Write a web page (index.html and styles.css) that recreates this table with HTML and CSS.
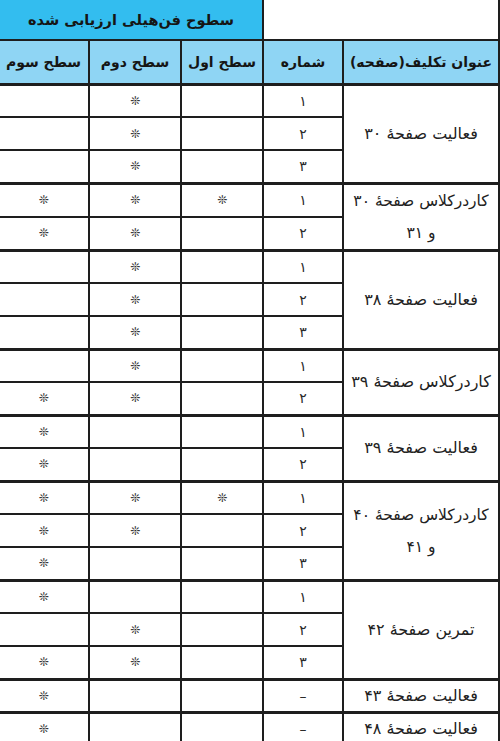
FILE: index.html
```html
<!DOCTYPE html>
<html lang="fa" dir="rtl">
<head>
<meta charset="utf-8">
<title>سطوح فن‌هیلی</title>
<link rel="stylesheet" href="styles.css">
</head>
<body>
<table class="grid">
  <colgroup>
    <col class="c-title">
    <col class="c-num">
    <col class="c-l1">
    <col class="c-l2">
    <col class="c-l3">
  </colgroup>
  <thead>
    <tr class="h1">
      <th colspan="2" class="blank"></th>
      <th colspan="3" class="super">سطوح فن‌هیلی ارزیابی شده</th>
    </tr>
    <tr class="h2">
      <th>عنوان تکلیف(صفحه)</th>
      <th>شماره</th>
      <th>سطح اول</th>
      <th>سطح دوم</th>
      <th>سطح سوم</th>
    </tr>
  </thead>
  <tbody>
    <tr class="g"><td rowspan="3" class="t">فعالیت صفحهٔ ۳۰</td><td class="n">۱</td><td></td><td class="s">❊</td><td></td></tr>
    <tr><td class="n">۲</td><td></td><td class="s">❊</td><td></td></tr>
    <tr><td class="n">۳</td><td></td><td class="s">❊</td><td></td></tr>

    <tr class="g"><td rowspan="2" class="t two">کاردرکلاس صفحهٔ ۳۰<br>و ۳۱</td><td class="n">۱</td><td class="s">❊</td><td class="s">❊</td><td class="s">❊</td></tr>
    <tr><td class="n">۲</td><td></td><td class="s">❊</td><td class="s">❊</td></tr>

    <tr class="g"><td rowspan="3" class="t">فعالیت صفحهٔ ۳۸</td><td class="n">۱</td><td></td><td class="s">❊</td><td></td></tr>
    <tr><td class="n">۲</td><td></td><td class="s">❊</td><td></td></tr>
    <tr><td class="n">۳</td><td></td><td class="s">❊</td><td></td></tr>

    <tr class="g"><td rowspan="2" class="t">کاردرکلاس صفحهٔ ۳۹</td><td class="n">۱</td><td></td><td class="s">❊</td><td></td></tr>
    <tr><td class="n">۲</td><td></td><td class="s">❊</td><td class="s">❊</td></tr>

    <tr class="g"><td rowspan="2" class="t">فعالیت صفحهٔ ۳۹</td><td class="n">۱</td><td></td><td></td><td class="s">❊</td></tr>
    <tr><td class="n">۲</td><td></td><td></td><td class="s">❊</td></tr>

    <tr class="g"><td rowspan="3" class="t two">کاردرکلاس صفحهٔ ۴۰<br>و ۴۱</td><td class="n">۱</td><td class="s">❊</td><td class="s">❊</td><td class="s">❊</td></tr>
    <tr><td class="n">۲</td><td></td><td class="s">❊</td><td class="s">❊</td></tr>
    <tr><td class="n">۳</td><td></td><td></td><td class="s">❊</td></tr>

    <tr class="g"><td rowspan="3" class="t">تمرین صفحهٔ ۴۲</td><td class="n">۱</td><td></td><td></td><td class="s">❊</td></tr>
    <tr><td class="n">۲</td><td></td><td class="s">❊</td><td></td></tr>
    <tr><td class="n">۳</td><td></td><td class="s">❊</td><td class="s">❊</td></tr>

    <tr class="g"><td class="t">فعالیت صفحهٔ ۴۳</td><td class="n">–</td><td></td><td></td><td class="s">❊</td></tr>

    <tr class="g"><td class="t">فعالیت صفحهٔ ۴۸</td><td class="n">–</td><td></td><td></td><td class="s">❊</td></tr>
  </tbody>
</table>
</body>
</html>
```

FILE: styles.css
```css
html, body {
  margin: 0;
  padding: 0;
  background: #ffffff;
}

body {
  width: 500px;
  height: 741px;
  overflow: hidden;
  font-family: "DejaVu Sans", sans-serif;
  color: #1c1c1c;
}

.grid {
  width: 500px;
  table-layout: fixed;
  border-collapse: collapse;
  direction: rtl;
}

.c-title { width: 156px; }
.c-num   { width: 80px; }
.c-l1    { width: 82px; }
.c-l2    { width: 92px; }
.c-l3    { width: 90px; }

.grid th,
.grid td {
  border: 2px solid #1e1e1e;
  padding: 0;
  text-align: center;
  vertical-align: middle;
}

.h1 { height: 40px; }
.h2 { height: 44px; }
.grid tbody tr { height: 33px; }

.h1 th { border-top: none; }

.blank {
  background: #ffffff;
  border-right: none;
}

.super {
  background: #33bdef;
  border-left: none;
  font-size: 14.5px;
  font-weight: bold;
  color: #151515;
}

.h2 th {
  background: #8fd5f4;
  font-size: 14px;
  font-weight: bold;
  color: #151515;
}

.h2 th:last-child { border-left: none; }
.grid tbody td:last-child { border-left: none; }

.grid tbody tr.g td { border-top-width: 3px; }

.t {
  font-size: 16px;
  line-height: 20px;
  font-weight: normal;
  color: #222;
}

.t.two { font-size: 15.5px; line-height: 32px; }

.n {
  font-size: 14px;
  color: #2a2a2a;
}

.s {
  font-size: 12px;
  color: #333333;
}
```
